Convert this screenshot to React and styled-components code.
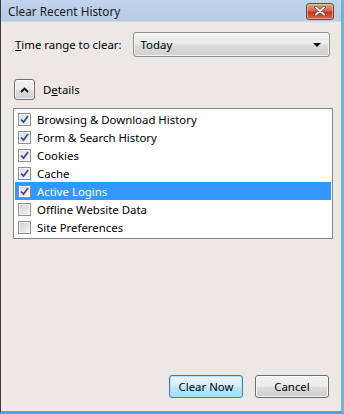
import React from "react";
import styled, { createGlobalStyle } from "styled-components";

const Global = createGlobalStyle`
  html, body { margin: 0; padding: 0; background: #ece9e6; }
  * { box-sizing: border-box; }
`;

const Window = styled.div`
  width: 344px;
  height: 414px;
  display: flex;
  flex-direction: column;
  font-family: "Noto Sans", "Open Sans", sans-serif;
  font-size: 11.4px;
  color: #000;
  border-left: 1px solid #3a3a3a;
  border-right: 3px solid #6fb3d8;
  border-bottom: 3px solid #4aa7d4;
  background: #ebe8e5;
  overflow: hidden;
`;

const TitleBar = styled.div`
  height: 22px;
  flex: none;
  display: flex;
  align-items: center;
  justify-content: space-between;
  padding: 0 7px 0 7px;
  background: linear-gradient(#c3d5ec, #b7cbe6);
  border-bottom: 1px solid #c9d6e6;
`;

const Title = styled.span`
  font-size: 11.8px;
  color: #1a1a1a;
`;

const CloseBtn = styled.div`
  width: 28px;
  height: 17px;
  margin-top: 1px;
  border-radius: 3px;
  border: 1px solid #7d3a30;
  background: linear-gradient(#e9a48f 0%, #d9644c 45%, #c43a1d 55%, #d5694c 100%);
  display: flex;
  align-items: center;
  justify-content: center;
  box-shadow: inset 0 0 0 1px rgba(255, 220, 200, 0.5);
`;

const Body = styled.div`
  flex: 1;
  display: flex;
  flex-direction: column;
  padding: 10px 11px 13px 11px;
`;

const RangeRow = styled.div`
  display: flex;
  align-items: center;
  gap: 11px;
  padding-left: 3px;
`;

const Label = styled.span`
  white-space: nowrap;
`;

const U = styled.span`
  text-decoration: underline;
`;

const Select = styled.div`
  flex: 1;
  height: 25px;
  border: 1px solid #8e8f8f;
  border-radius: 3px;
  background: linear-gradient(#f2f2f2 0%, #ebebeb 45%, #dcdcdc 55%, #cfcfcf 100%);
  display: flex;
  align-items: center;
  justify-content: space-between;
  padding: 0 8px 0 7px;
  box-shadow: inset 0 0 0 1px rgba(255, 255, 255, 0.7);
`;

const Arrow = styled.div`
  width: 0;
  height: 0;
  border-left: 4px solid transparent;
  border-right: 4px solid transparent;
  border-top: 4px solid #111;
`;

const DetailsRow = styled.div`
  display: flex;
  align-items: center;
  gap: 8px;
  margin-top: 22px;
  padding-left: 2px;
`;

const SmallBtn = styled.div`
  width: 21px;
  height: 21px;
  border: 1px solid #707070;
  border-radius: 3px;
  background: linear-gradient(#f2f2f2 0%, #ebebeb 45%, #dddddd 55%, #cfcfcf 100%);
  display: flex;
  align-items: center;
  justify-content: center;
  box-shadow: inset 0 0 0 1px rgba(255, 255, 255, 0.7);
`;

const List = styled.div`
  margin-top: 8px;
  margin-left: 1px;
  width: 320px;
  height: 131px;
  background: #fff;
  border: 1px solid #828790;
  padding: 1px;
  display: flex;
  flex-direction: column;
`;

const Item = styled.div`
  height: 18px;
  display: flex;
  align-items: center;
  gap: 6px;
  padding-left: 3px;
  background: ${(p) => (p.$selected ? "#3399ff" : "transparent")};
  color: ${(p) => (p.$selected ? "#fff" : "#000")};
`;

const Box = styled.div`
  width: 13px;
  height: 13px;
  border: 1px solid #8f8f8f;
  background: ${(p) => (p.$checked ? "linear-gradient(135deg, #d7d9e8, #fafafa)" : "linear-gradient(135deg, #cfcfcf, #f4f4f4)")};
  display: flex;
  align-items: center;
  justify-content: center;
  box-shadow: inset 0 0 0 1px #f4f4f4;
`;

const Spacer = styled.div`
  flex: 1;
`;

const ButtonRow = styled.div`
  display: flex;
  justify-content: flex-end;
  gap: 12px;
  padding-right: 1px;
`;

const Button = styled.div`
  width: 74px;
  height: 23px;
  border-radius: 3px;
  border: 1px solid ${(p) => (p.$default ? "#3c7fb1" : "#707070")};
  background: ${(p) =>
    p.$default
      ? "linear-gradient(#e8f5fd 0%, #d9effc 45%, #bee6fd 55%, #a7d9f5 100%)"
      : "linear-gradient(#f2f2f2 0%, #ebebeb 45%, #dddddd 55%, #cfcfcf 100%)"};
  box-shadow: inset 0 0 0 1px ${(p) => (p.$default ? "rgba(170, 225, 250, 0.9)" : "rgba(255,255,255,0.7)")};
  display: flex;
  align-items: center;
  justify-content: center;
`;

const Check = () => (
  <svg width="9" height="9" viewBox="0 0 9 9">
    <path d="M1 4.5 L3.5 7.2 L8 1" fill="none" stroke="#3b4a96" strokeWidth="1.8" />
  </svg>
);

const items = [
  ["Browsing & Download History", true],
  ["Form & Search History", true],
  ["Cookies", true],
  ["Cache", true],
  ["Active Logins", true, true],
  ["Offline Website Data", false],
  ["Site Preferences", false],
];

export default function App() {
  return (
    <>
      <Global />
      <Window>
        <TitleBar>
          <Title>Clear Recent History</Title>
          <CloseBtn>
            <svg width="12" height="10" viewBox="0 0 12 10">
              <path d="M2 1.5 L10 8.5 M10 1.5 L2 8.5" stroke="#5a2a22" strokeWidth="3.4" strokeLinecap="round" />
              <path d="M2 1.5 L10 8.5 M10 1.5 L2 8.5" stroke="#fff" strokeWidth="2" strokeLinecap="round" />
            </svg>
          </CloseBtn>
        </TitleBar>
        <Body>
          <RangeRow>
            <Label>
              <U>T</U>ime range to clear:
            </Label>
            <Select>
              <span>Today</span>
              <Arrow />
            </Select>
          </RangeRow>
          <DetailsRow>
            <SmallBtn>
              <svg width="9" height="6" viewBox="0 0 9 6">
                <path d="M1 5 L4.5 1.5 L8 5" fill="none" stroke="#111" strokeWidth="1.8" />
              </svg>
            </SmallBtn>
            <span>
              D<U>e</U>tails
            </span>
          </DetailsRow>
          <List>
            {items.map(([label, checked, sel]) => (
              <Item key={label} $selected={sel}>
                <Box $checked={checked}>{checked && <Check />}</Box>
                <span>{label}</span>
              </Item>
            ))}
          </List>
          <Spacer />
          <ButtonRow>
            <Button $default>Clear Now</Button>
            <Button>Cancel</Button>
          </ButtonRow>
        </Body>
      </Window>
    </>
  );
}
